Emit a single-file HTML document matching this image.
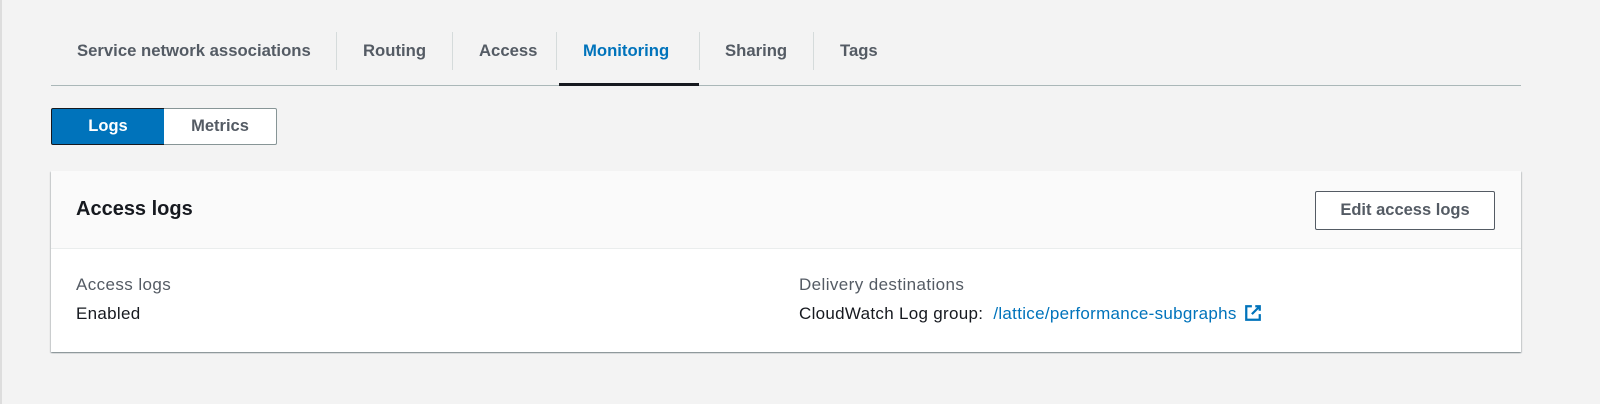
<!DOCTYPE html>
<html><head><style>
*{box-sizing:border-box;margin:0;padding:0}
body{width:1600px;height:404px;background:#f3f3f3;font-family:"Liberation Sans",sans-serif;position:relative;overflow:hidden;border-left:2px solid #ddd}
.t{position:absolute;top:40px;font-size:16.7px;font-weight:bold;color:#545b64;line-height:22px}
.sep{position:absolute;top:32px;height:38px;width:1px;background:#d5dbdb}
.line{position:absolute;left:49px;width:1470px;top:85px;height:1px;background:#aab7b8}
.act{position:absolute;left:557px;width:140px;top:83px;height:3px;background:#16191f}
.btn{position:absolute;top:108px;height:37px;font-size:16.5px;font-weight:bold;text-align:center;line-height:35px}
.card{position:absolute;left:49px;top:171px;width:1470px;height:181px;background:#fff;box-shadow:0 1px 1px rgba(0,28,36,.3),1px 1px 1px rgba(0,28,36,.15),-1px 1px 1px rgba(0,28,36,.15)}
.hdr{height:78px;background:#fafafa;border-bottom:1px solid #eaeded;position:relative}
.lbl{position:absolute;font-size:17px;color:#545b64;letter-spacing:.4px}
.val{position:absolute;font-size:17px;color:#16191f;letter-spacing:.3px}
</style></head><body>
<div class="t" style="left:75px">Service network associations</div>
<div class="sep" style="left:334px"></div>
<div class="t" style="left:361px">Routing</div>
<div class="sep" style="left:450px"></div>
<div class="t" style="left:477px">Access</div>
<div class="sep" style="left:554px"></div>
<div class="t" style="left:581px;color:#0073bb">Monitoring</div>
<div class="sep" style="left:697px"></div>
<div class="t" style="left:723px">Sharing</div>
<div class="sep" style="left:811px"></div>
<div class="t" style="left:838px">Tags</div>
<div class="line"></div><div class="act"></div>
<div class="btn" style="left:49px;width:114px;background:#0073bb;color:#fff;border:1px solid #16191f;border-radius:2px 0 0 2px">Logs</div>
<div class="btn" style="left:162px;width:113px;background:#fff;color:#545b64;border:1px solid #879596;border-left:none;border-radius:0 2px 2px 0">Metrics</div>
<div class="card">
<div class="hdr">
<div style="position:absolute;left:25px;top:27px;font-size:20px;font-weight:bold;color:#16191f">Access logs</div>
<div style="position:absolute;left:1264px;top:20px;width:180px;height:39px;border:1px solid #545b64;border-radius:2px;background:#fff;font-size:16.5px;font-weight:bold;color:#545b64;text-align:center;line-height:37px">Edit access logs</div>
</div>
<div class="lbl" style="left:25px;top:104px">Access logs</div>
<div class="val" style="left:25px;top:133px">Enabled</div>
<div class="lbl" style="left:748px;top:104px">Delivery destinations</div>
<div class="val" style="left:748px;top:133px">CloudWatch Log group:&nbsp; <span style="color:#0073bb">/lattice/performance-subgraphs</span>
<svg width="18" height="18" viewBox="0 0 16 16" style="vertical-align:-3px;margin-left:2px"><path d="M7 2H2v12h12V9" fill="none" stroke="#0073bb" stroke-width="2"/><path d="M10 2h4v4M14 2L7 9" fill="none" stroke="#0073bb" stroke-width="2"/></svg></div>
</div>
</body></html>
